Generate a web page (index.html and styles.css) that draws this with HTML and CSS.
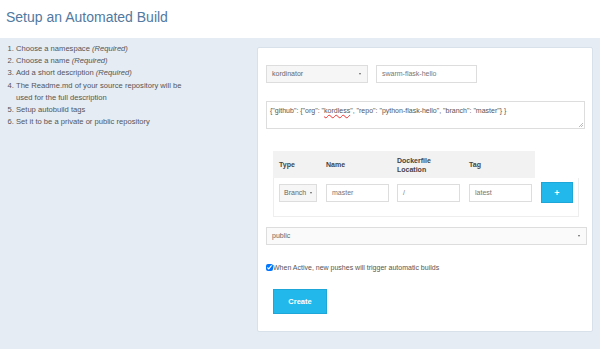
FILE: index.html
```html
<!DOCTYPE html>
<html lang="en">
<head>
  <meta charset="UTF-8">
  <meta name="viewport" content="width=device-width, initial-scale=1.0">
  <title>Setup an Automated Build</title>
  <link rel="stylesheet" href="styles.css">
</head>
<body>
  <div class="header">
    <h1>Setup an Automated Build</h1>
  </div>

  <div class="main">
    <ol class="steps">
      <li>Choose a namespace <em>(Required)</em></li>
      <li>Choose a name <em>(Required)</em></li>
      <li>Add a short description <em>(Required)</em></li>
      <li>The Readme.md of your source repository will be used for the full description</li>
      <li>Setup autobuild tags</li>
      <li>Set it to be a private or public repository</li>
    </ol>

    <div class="card">
      <div class="repo-row">
        <div class="select namespace">kordinator<span class="caret"></span></div>
        <div class="input name">swarm-flask-hello</div>
      </div>

      <div class="textarea">{"github": {"org": "<span class="typo">kordless</span>", "repo": "python-flask-hello", "branch": "master"} }</div>

      <div class="tags">
        <div class="th">Type</div>
        <div class="th">Name</div>
        <div class="th">Dockerfile<br>Location</div>
        <div class="th">Tag</div>
        <div class="th blank"></div>

        <div class="td"><div class="select small">Branch<span class="caret"></span></div></div>
        <div class="td"><div class="input">master</div></div>
        <div class="td"><div class="input">/</div></div>
        <div class="td"><div class="input">latest</div></div>
        <div class="td"><button class="add">+</button></div>
      </div>

      <div class="select visibility">public<span class="caret"></span></div>

      <label class="active">
        <input type="checkbox" checked>When Active, new pushes will trigger automatic builds
      </label>

      <button class="create">Create</button>
    </div>
  </div>
</body>
</html>
```

FILE: styles.css
```css
body {
  margin: 0;
  font-family: "Liberation Sans", Arial, sans-serif;
  background-color: #e5ecf4;
  height: 349px;
  overflow: hidden;
}
.header {
  background-color: #fff;
  height: 38px;
}
h1 {
  margin: 0;
  padding: 9px 0 0 6px;
  font-size: 14px;
  font-weight: normal;
  color: #5279a0;
}
.main {
  display: flex;
  align-items: flex-start;
}
.steps {
  width: 257px;
  box-sizing: border-box;
  margin: 0;
  padding: 5px 60px 0 16px;
  font-size: 7.6px;
  line-height: 12.2px;
  color: #555;
}
.card {
  width: 336px;
  box-sizing: border-box;
  margin-top: 9px;
  padding: 17px 7px 17px 8px;
  background-color: #fff;
  border: 1px solid #d8e0e9;
  border-radius: 2px;
  font-size: 7px;
  color: #777;
}
.repo-row {
  display: flex;
  gap: 8px;
}
.select, .input, .textarea {
  box-sizing: border-box;
  height: 18px;
  line-height: 16px;
  padding: 0 5px;
  border: 1px solid #ddd;
  position: relative;
}
.select {
  background-color: #f6f6f6;
  color: #666;
}
.caret {
  position: absolute;
  right: 6px;
  top: 7px;
  border-left: 1.5px solid transparent;
  border-right: 1.5px solid transparent;
  border-top: 2px solid #666;
}
.namespace {
  width: 102px;
}
.name {
  width: 101px;
}
.textarea {
  margin-top: 18px;
  height: 28px;
  padding: 3px 3px;
  line-height: 11px;
  color: #555;
}
.textarea::after {
  content: "";
  position: absolute;
  right: 1px;
  bottom: 1px;
  width: 4px;
  height: 4px;
  background: linear-gradient(135deg, transparent 45%, #bbb 45%, #bbb 55%, transparent 55%, transparent 70%, #bbb 70%, #bbb 80%, transparent 80%);
}
.typo {
  text-decoration: underline wavy #e33;
  text-decoration-thickness: 0.5px;
}
.tags {
  display: grid;
  grid-template-columns: 47px 71px 72px 72px 44px;
  margin: 22px 0 0 7px;
  width: 306px;
  box-sizing: border-box;
}
.th {
  background-color: #f2f2f2;
  height: 27px;
  padding: 0 6px;
  display: flex;
  align-items: center;
  font-weight: bold;
  color: #444;
  line-height: 9px;
}
.th.blank {
  background-color: transparent;
}
.td {
  padding: 6px 6px 14px 6px;
  border-bottom: 1px solid #eee;
}
.td:nth-child(6) {
  border-left: 1px solid #eee;
  padding-left: 5px;
}
.td:nth-child(10) {
  border-right: 1px solid #eee;
  padding: 4px 0 13px 6px;
}
.tags .input {
  width: 63px;
}
.select.small {
  width: 38px;
  padding: 0 4px;
}
.select.small .caret {
  right: 4px;
}
.add {
  display: block;
  width: 32px;
  height: 21px;
  border: 1px solid #1fa6d8;
  background-color: #22b8eb;
  color: #fff;
  font-weight: bold;
  font-size: 9px;
  padding: 0;
  font-family: inherit;
}
.visibility {
  margin-top: 10px;
  width: 321px;
  background-color: #fafafa;
}
.active {
  display: flex;
  align-items: center;
  margin-top: 17px;
  height: 10px;
  color: #555;
}
.active input {
  width: 7px;
  height: 7px;
  margin: 0;
}
.create {
  display: block;
  margin: 17px 0 0 7px;
  width: 54px;
  height: 25px;
  border: 1px solid #1fa6d8;
  background-color: #22b8eb;
  color: #fff;
  font-weight: bold;
  font-size: 7.5px;
  font-family: inherit;
  padding: 0;
}
```
